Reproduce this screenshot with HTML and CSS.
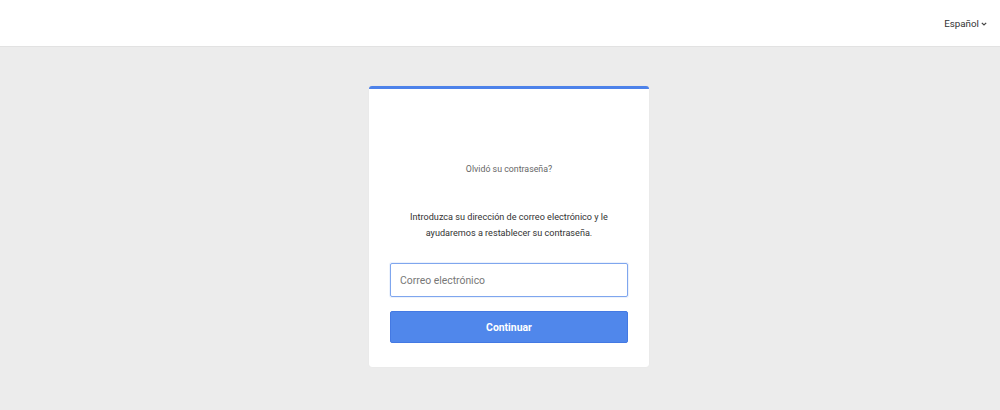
FILE: index.html
```html
<!DOCTYPE html>
<html lang="es">
<head>
<meta charset="utf-8">
<title>Olvidó su contraseña</title>
<link rel="stylesheet" href="styles.css">
</head>
<body>
<header class="topbar">
  <button class="lang" type="button">Español
    <svg class="chev" width="6" height="4" viewBox="0 0 6 4"><path d="M0.8 0.8l2.2 2.2 2.2-2.2" fill="none" stroke="#444" stroke-width="1.2"/></svg>
  </button>
</header>
<main class="stage">
  <section class="card">
    <h1 class="title">Olvidó su contraseña?</h1>
    <p class="lead">Introduzca su dirección de correo electrónico y le ayudaremos a restablecer su contraseña.</p>
    <form class="form">
      <input class="field" type="email" placeholder="Correo electrónico" autofocus>
      <button class="submit" type="button">Continuar</button>
    </form>
  </section>
</main>
</body>
</html>
```
FILE: styles.css
```css
html, body {
  margin: 0;
  height: 100%;
}
body {
  background: #ececec;
  font-family: Roboto, "Liberation Sans", Arial, sans-serif;
  color: #333;
}
.topbar {
  height: 46px;
  background: #fff;
  border-bottom: 1px solid #e2e2e2;
  display: flex;
  align-items: center;
  justify-content: flex-end;
  padding-right: 13px;
}
.lang {
  border: 0;
  background: none;
  padding: 0;
  font: inherit;
  font-size: 9.8px;
  color: #333;
  display: flex;
  align-items: center;
  gap: 2px;
}
.chev { margin-top: 1px; }
.stage {
  display: flex;
  justify-content: center;
  padding: 39px 0 0 18px;
}
.card {
  width: 280px;
  height: 281px;
  box-sizing: border-box;
  background: #fff;
  border-top: 3px solid #4d82ea;
  border-radius: 3px;
  box-shadow: 0 0 1px rgba(0,0,0,0.08);
  padding: 73px 21px 24px 21px;
  text-align: center;
}
.title {
  margin: 0;
  font-size: 8.8px;
  font-weight: 400;
  color: #666;
  line-height: 14px;
}
.lead {
  margin: 33px 0 0;
  font-size: 9.1px;
  line-height: 16px;
  color: #333;
}
.form {
  margin-top: 22px;
  display: flex;
  flex-direction: column;
  gap: 14px;
}
.field {
  height: 34px;
  box-sizing: border-box;
  border: 1px solid #7fa6ee;
  border-radius: 2px;
  padding: 0 9px;
  font: inherit;
  font-size: 10.4px;
  color: #333;
  outline: none;
  box-shadow: 0 0 0 1px rgba(127,166,238,0.15);
}
.field::placeholder { color: #777; }
.submit {
  height: 32px;
  border: 1px solid #4479e3;
  border-radius: 2px;
  background: #5087eb;
  color: #fff;
  font: inherit;
  font-size: 10.4px;
  font-weight: 700;
}
```
